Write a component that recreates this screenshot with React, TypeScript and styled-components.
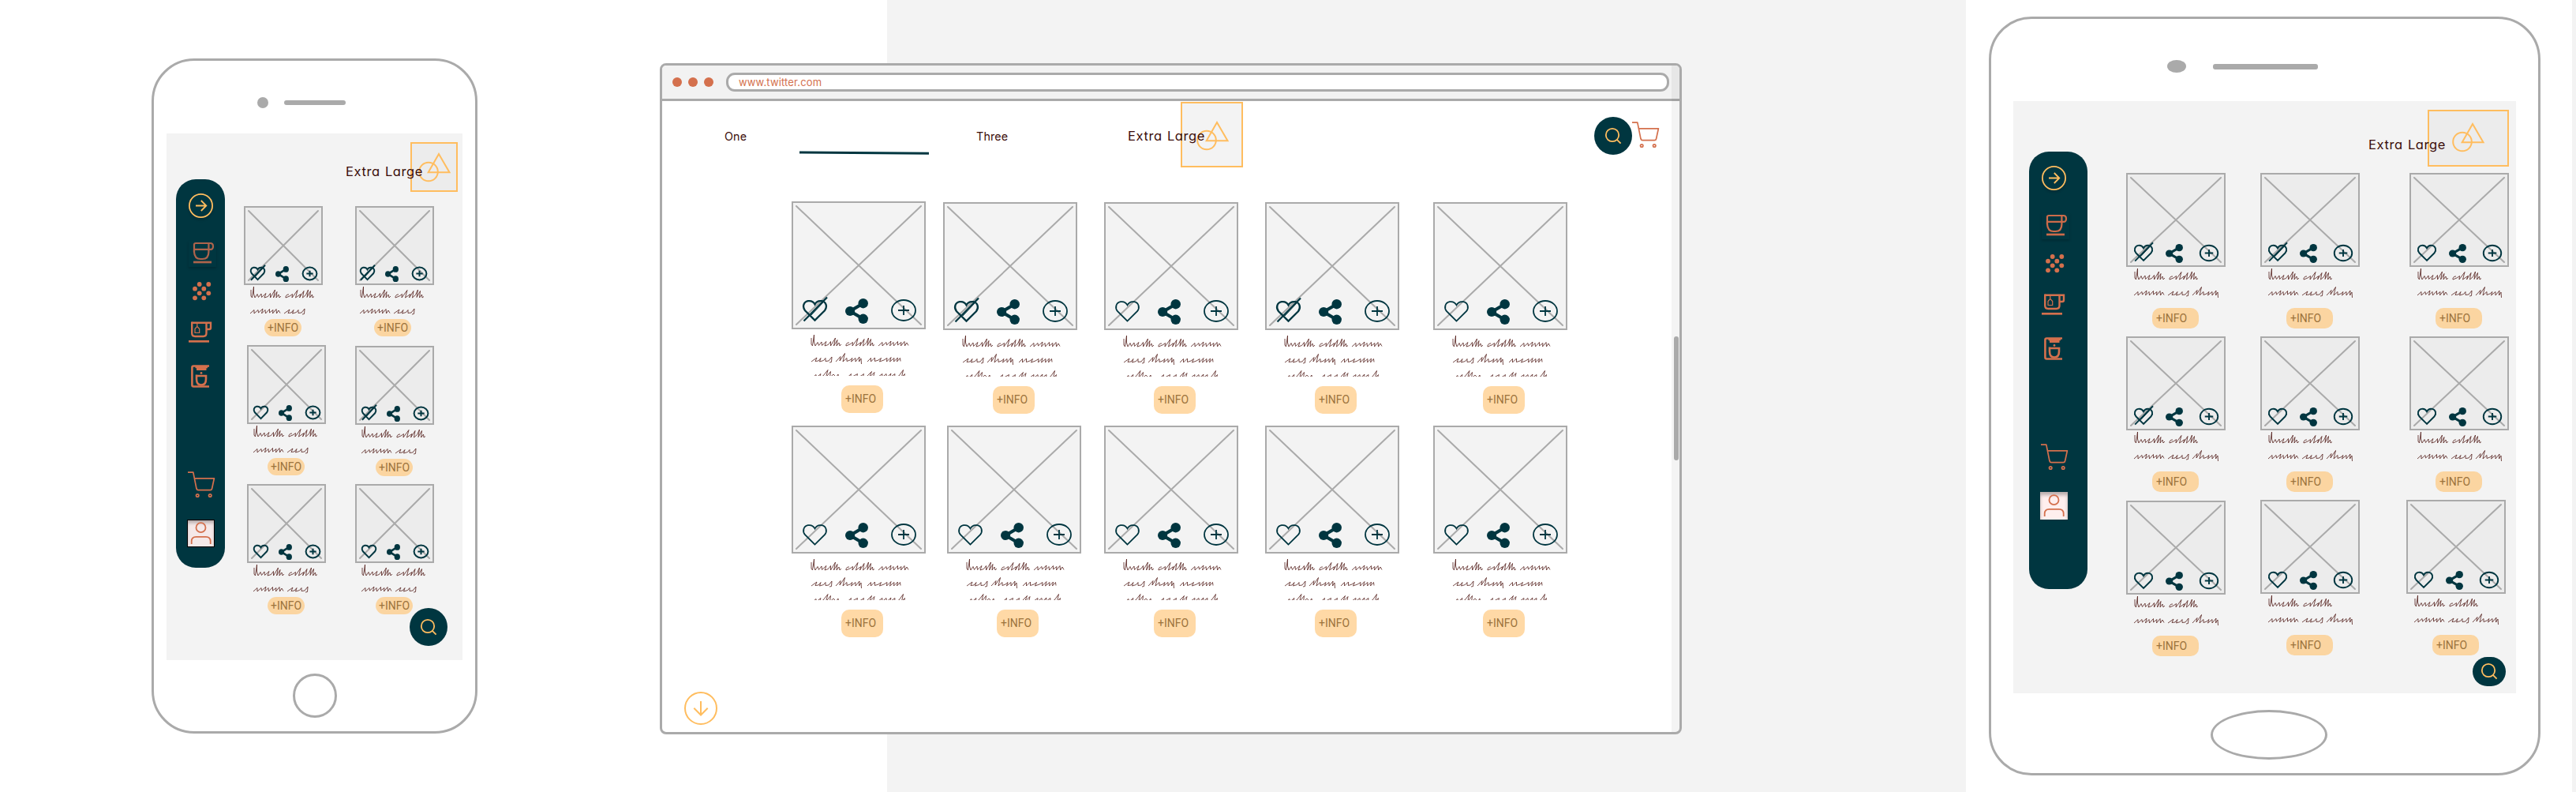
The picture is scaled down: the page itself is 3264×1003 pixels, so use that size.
import React from "react";
import styled, { createGlobalStyle, css } from "styled-components";

const c = {
  line: "#aaaaaa",
  paper: "#f3f3f3",
  thumb: "#ececec",
  teal: "#003640",
  coral: "#d4704d",
  amber: "#ffbd5f",
  ink: "#3b0d0a",
  pillText: "#9c733c",
};

const Global = createGlobalStyle`
  * { box-sizing: border-box; }
  body { margin: 0; background: #ffffff; }
  svg { display: block; overflow: visible; flex: none; }
`;

const Board = styled.main`
  width: 3264px;
  height: 1003px;
  display: flex;
  align-items: flex-start;
  overflow: hidden;
  background: linear-gradient(
    to right,
    #ffffff 1124px,
    ${c.paper} 1124px 2491px,
    #ffffff 2491px 3259px,
    ${c.paper} 3259px
  );
`;

/* ---------- sizes ---------- */

type Kind = "phone" | "browser" | "tablet";

const sizes = {
  phone: {
    w: 100, h: 100, x: [6, 94, 6, 94], fill: c.thumb,
    left: 8, gapA: 13, gapB: 17, bottom: 6, shareDrop: 2,
    heart: [19, 17], share: [17, 20], plus: [19, 17], stroke: 2,
    textLeft: 8, textTop: 2, textH: 38, textW: 82,
    pillLeft: 26, pillTop: 3, pillW: 47, pillH: 22, pillR: "11px", pillPad: 0,
    pill: "#fbd5a1", rowH: 176,
  },
  browser: {
    w: 170, h: 162, x: [6, 164, 6, 156], fill: c.paper,
    left: 14, gapA: 23, gapB: 29, bottom: 10, shareDrop: 3,
    heart: [31, 27], share: [29, 32], plus: [32, 28], stroke: 1.8,
    textLeft: 24, textTop: 7, textH: 52, textW: 126,
    pillLeft: 63, pillTop: 12, pillW: 53, pillH: 35, pillR: "10px", pillPad: 5,
    pill: "#ffd9a6", rowH: 284,
  },
  tablet: {
    w: 126, h: 119, x: [6, 120, 6, 113], fill: c.thumb,
    left: 10, gapA: 16, gapB: 21, bottom: 7, shareDrop: 2,
    heart: [24, 21], share: [22, 24], plus: [24, 21], stroke: 1.9,
    textLeft: 10, textTop: 2, textH: 38, textW: 110,
    pillLeft: 33, pillTop: 12, pillW: 59, pillH: 26, pillR: "10px", pillPad: 5,
    pill: "#fbd5a1", rowH: 207,
  },
} as const;

/* ---------- product card ---------- */

const Cell = styled.article<{ $kind: Kind; $ml: number; $mt: number }>`
  display: flex;
  flex-direction: column;
  align-items: flex-start;
  flex: none;
  width: ${(p) => sizes[p.$kind].w}px;
  margin: ${(p) => p.$mt}px 0 0 ${(p) => p.$ml}px;
`;

const Thumb = styled.div<{ $kind: Kind }>`
  position: relative;
  width: ${(p) => sizes[p.$kind].w}px;
  height: ${(p) => sizes[p.$kind].h}px;
  border: 2px solid ${c.line};
  background: ${(p) => sizes[p.$kind].fill};
`;

const Cross = styled.svg`
  position: absolute;
  left: -2px;
  top: -2px;
`;

const Actions = styled.div<{ $kind: Kind; $shift: number }>`
  position: absolute;
  left: ${(p) => sizes[p.$kind].left - 2 + p.$shift}px;
  bottom: ${(p) => sizes[p.$kind].bottom - 2}px;
  display: flex;
  align-items: flex-end;
`;

const ShareSlot = styled.span<{ $kind: Kind }>`
  margin: 0 ${(p) => sizes[p.$kind].gapB}px -${(p) => sizes[p.$kind].shareDrop}px
    ${(p) => sizes[p.$kind].gapA}px;
`;

const Copy = styled.div<{ $kind: Kind; $shift: number }>`
  display: flex;
  flex-direction: column;
  flex: none;
  overflow: hidden;
  width: ${(p) => sizes[p.$kind].textW}px;
  height: ${(p) => sizes[p.$kind].textH}px;
  margin: ${(p) => sizes[p.$kind].textTop}px 0 0
    ${(p) => sizes[p.$kind].textLeft + p.$shift}px;
`;

const CopyLine = styled.div<{ $indent?: number }>`
  display: flex;
  gap: 5px;
  height: 20px;
  flex: none;
  padding-left: ${(p) => p.$indent ?? 0}px;
`;

const Pill = styled.button<{ $kind: Kind; $shift: number }>`
  flex: none;
  display: flex;
  align-items: center;
  justify-content: ${(p) => (p.$kind === "phone" ? "center" : "flex-start")};
  width: ${(p) => sizes[p.$kind].pillW}px;
  height: ${(p) => sizes[p.$kind].pillH}px;
  margin: ${(p) => sizes[p.$kind].pillTop}px 0 0
    ${(p) => sizes[p.$kind].pillLeft + p.$shift}px;
  padding: 0 0 ${(p) => (p.$kind === "browser" ? 2 : 0)}px
    ${(p) => sizes[p.$kind].pillPad}px;
  border: 0;
  border-radius: ${(p) => sizes[p.$kind].pillR};
  background: ${(p) => sizes[p.$kind].pill};
  color: ${c.pillText};
  font: 14px/16px Roboto, "Liberation Sans", sans-serif;
  white-space: nowrap;
`;

const words = {
  one: { w: 39, d: "M1 4L1 12L2.5 14L4.500 0L4.500 9L6 14L9 9.500L10.500 13.500L14 9L14.500 13.500L20 8.500L18 14L22.500 12.500L25.500 8.500L25.500 14L31.500 4L29.500 14L34 6.500L33 14L36 10L37 14L39 12" },
  two: { w: 37, d: "M5 10C2 9.500 .5 12.500 1 14L6 12L9.500 9.500L9 14L16 4.500L13.500 14L20 9.500L18.500 14L24 5.500L22.500 14L26.500 10.500L29.500 4L28 13.500L32.500 5.500L31.500 14L34.500 10L35 14L37 12.500" },
  three: { w: 38, d: "M0 14L5 9.500L5 14L10 9.500L10.500 13L16 8L14.500 14L19 9.500L19.500 14L24.500 8.500L24.500 13L29 9.500L28.500 14L33 8.500L33.500 14L36 10L38 13.500" },
  four: { w: 26, d: "M0 14L7 9L5 13.500L9 13L12 9.500L10.500 14L15.500 12.500L18 9.500L18 13.500L22 13L26 8L25.500 14.500L23 15" },
  five: { w: 35, d: "M0 14L6 7.500L5 13L11.500 3.500L9 14L14 9.500L14 13.500L18 12L21 9.500L19.500 14L25 9.500L25 14L30 8L29.500 14L32 10L32.500 17" },
  six: { w: 42, d: "M0 14L4.500 9.500L4.500 14L9.500 9L9.500 13.500L14 12L17.500 9.500L15.500 14L21 12L25 9.500L24.500 14L30 8.500L28.500 14L34 9.500L33.500 14L38.500 9L37.500 14L41.500 9.500L42 13.500" },
  seven: { w: 39, d: "M0 14.500L5 10.500L5.500 14L11 9.500L9.500 14L14 12L20 4.500L17.500 14L23.500 6.500L22.500 14L27 10L30.500 13.500L33 10L33.500 14L39 12.500" },
  eight: { w: 73, d: "M0 14.500L5.500 9.500L4.500 14L9 12L13.500 9.500L12.500 14L18 12L21.500 9.500L20.500 14L25 13L31.500 6.500L28.500 14L35 7.500L33.500 14L40 13L45 9.500L44.500 14L50 9.500L50.500 14L56 9L54.500 14L61 9.500L60.500 14L66 12L71.500 4.500L69.500 13.500L73.500 9.500L72.500 14" },
} as const;

type WordName = keyof typeof words;

const Word = ({ name }: { name: WordName }) => (
  <svg width={words[name].w} height="20" fill="none">
    <path d={words[name].d} stroke="#54201c" strokeWidth="0.8" strokeLinejoin="bevel" />
  </svg>
);

const copyLines: Record<Kind, { indent?: number; words: WordName[] }[]> = {
  phone: [{ words: ["one", "two"] }, { words: ["three", "four"] }],
  browser: [
    { words: ["one", "two", "three"] },
    { indent: 1, words: ["four", "five", "six"] },
    { indent: 2, words: ["seven", "eight"] },
  ],
  tablet: [{ words: ["one", "two"] }, { words: ["three", "four", "five"] }],
};

const Heart = ({ kind, off }: { kind: Kind; off?: boolean }) => {
  const s = sizes[kind];
  const sw = s.stroke + (off && kind === "browser" ? 0.5 : 0);
  return (
    <svg width={s.heart[0]} height={s.heart[1]} viewBox="0 0 31 27" preserveAspectRatio="none" fill="none" stroke={c.teal} strokeWidth={sw}>
      <path vectorEffect="non-scaling-stroke" d="M15.5 25.6L3 13.2C-.6 8.6 1 2.4 6.8 1.2C10.6.6 13.8 2.2 15.5 5.4C17.2 2.2 20.4.6 24.2 1.2C30 2.4 31.6 8.6 28 13.2Z" />
      {off && <path vectorEffect="non-scaling-stroke" d="M1.5 26.5L31-3.5" />}
      {off && <path vectorEffect="non-scaling-stroke" d="M11 19L26 3" strokeWidth={1} />}
    </svg>
  );
};

const Share = ({ kind }: { kind: Kind }) => (
  <svg width={sizes[kind].share[0]} height={sizes[kind].share[1]} viewBox="0 0 29 32" preserveAspectRatio="none" fill={c.teal}>
    <circle cx="6.1" cy="16" r="6.1" />
    <circle cx="22.7" cy="6.2" r="6.2" />
    <circle cx="22.7" cy="25.8" r="6.2" />
    <path d="M22.7 6.2L6 16L22.7 25.8" fill="none" stroke={c.teal} strokeWidth="4.2" />
  </svg>
);

const Plus = ({ kind }: { kind: Kind }) => (
  <svg width={sizes[kind].plus[0]} height={sizes[kind].plus[1]} viewBox="0 0 32 28" preserveAspectRatio="none" fill="none" stroke={c.teal} strokeWidth={sizes[kind].stroke}>
    <ellipse vectorEffect="non-scaling-stroke" cx="16" cy="14" rx="15" ry="13" />
    <path vectorEffect="non-scaling-stroke" d="M9 14H23M16 8V20" />
  </svg>
);

type CardSpec = { ml: number; mt?: number; off?: boolean; shift?: number };

const Card = ({ kind, ml, mt = 0, off, shift = 0 }: CardSpec & { kind: Kind }) => {
  const s = sizes[kind];
  const [x1, x2, y1, y2] = s.x;
  return (
    <Cell $kind={kind} $ml={ml} $mt={mt}>
      <Thumb $kind={kind}>
        <Cross width={s.w} height={s.h} stroke={c.line} strokeWidth="2" strokeLinecap="round">
          <path d={`M${x1} ${y1}L${x2} ${y2}M${x2} ${y1}L${x1} ${y2}`} />
        </Cross>
        <Actions $kind={kind} $shift={shift}>
          <Heart kind={kind} off={off} />
          <ShareSlot $kind={kind}>
            <Share kind={kind} />
          </ShareSlot>
          <Plus kind={kind} />
        </Actions>
      </Thumb>
      <Copy $kind={kind} $shift={shift}>
        {copyLines[kind].map((l, i) => (
          <CopyLine key={i} $indent={l.indent}>
            {l.words.map((w) => (
              <Word key={w} name={w} />
            ))}
          </CopyLine>
        ))}
      </Copy>
      <Pill $kind={kind} $shift={shift}>+INFO</Pill>
    </Cell>
  );
};

const Row = styled.div<{ $h: number }>`
  display: flex;
  align-items: flex-start;
  height: ${(p) => p.$h}px;
  flex: none;
`;

const Catalogue = styled.section<{ $mt: number }>`
  display: flex;
  flex-direction: column;
  margin-top: ${(p) => p.$mt}px;
`;

const Cards = ({ kind, top, rows }: { kind: Kind; top: number; rows: CardSpec[][] }) => (
  <Catalogue $mt={top}>
    {rows.map((row, i) => (
      <Row key={i} $h={sizes[kind].rowH}>
        {row.map((card, j) => (
          <Card key={j} kind={kind} {...card} />
        ))}
      </Row>
    ))}
  </Catalogue>
);

/* ---------- shared pieces ---------- */

const handFont = css`
  font-family: Inter, "Open Sans", sans-serif;
  font-feature-settings: "cv11" 1;
  color: ${c.ink};
  white-space: nowrap;
`;

const Brand = styled.div<{ $mt?: number; $ml?: number }>`
  display: flex;
  align-items: flex-start;
  justify-content: flex-end;
  margin: ${(p) => p.$mt ?? 0}px 0 0 ${(p) => p.$ml ?? 0}px;
`;

const BrandName = styled.span<{ $mt: number; $overlap: number }>`
  ${handFont}
  position: relative;
  z-index: 1;
  width: 96px;
  font-size: 16.5px;
  font-weight: 400;
  letter-spacing: 0.6px;
  word-spacing: 1px;
  line-height: 20px;
  margin: ${(p) => p.$mt}px -${(p) => p.$overlap}px 0 0;
`;

const LogoBox = styled.div<{ $w: number; $h: number; $fill: string; $px: number; $py: number }>`
  flex: none;
  width: ${(p) => p.$w}px;
  height: ${(p) => p.$h}px;
  border: 2px solid ${c.amber};
  background: ${(p) => p.$fill};
  padding: ${(p) => p.$py - 2}px 0 0 ${(p) => p.$px - 2}px;
`;

const LogoMark = () => (
  <svg width="41" height="37" fill="none" stroke={c.amber} strokeWidth="2">
    <circle cx="13" cy="24.5" r="11.8" />
    <path d="M26 2L39.5 25.2H12.7Z" />
  </svg>
);

const SearchDisc = styled.button<{ $w: number; $h: number; $r: string }>`
  flex: none;
  display: flex;
  align-items: center;
  justify-content: center;
  padding: 0 0 1px;
  border: 0;
  width: ${(p) => p.$w}px;
  height: ${(p) => p.$h}px;
  border-radius: ${(p) => p.$r};
  background: ${c.teal};
`;

const SearchIcon = () => (
  <svg width="20" height="20" fill="none" stroke={c.amber} strokeWidth="1.8">
    <circle cx="9" cy="9" r="8.2" />
    <path d="M14.8 14.8L19.6 19.6" />
  </svg>
);

const CartIcon = () => (
  <svg width="34" height="34" fill="none" stroke={c.coral} strokeWidth="1.7" strokeLinejoin="round">
    <path d="M0 1.2H6.8L11 21.8Q11.5 23.7 13.2 23.7H28.4Q30.2 23.7 30.6 21.8L33.4 8.8H8.4" />
    <circle cx="12.2" cy="30.5" r="1.7" />
    <circle cx="28.2" cy="30.5" r="1.7" />
  </svg>
);

/* ---------- side bar ---------- */

const Side = styled.nav<{ $w: number; $h: number; $ml: number; $mt: number }>`
  flex: none;
  display: flex;
  flex-direction: column;
  align-items: flex-start;
  width: ${(p) => p.$w}px;
  height: ${(p) => p.$h}px;
  margin: ${(p) => p.$mt}px 0 0 ${(p) => p.$ml}px;
  border-radius: 25px;
  background: ${c.teal};
`;

const Slot = styled.span<{ $mt: number; $ml: number }>`
  margin: ${(p) => p.$mt}px 0 0 ${(p) => p.$ml}px;
`;

const GoSlot = styled(Slot)`
  border-radius: 50%;
  box-shadow: 0 3px 3px rgba(0, 0, 0, 0.14);
`;

const CupSlot = styled(Slot)`
  box-shadow: 0 2px 3px rgba(0, 0, 0, 0.2);
`;

const Avatar = styled(Slot)<{ $framed: boolean }>`
  width: 35px;
  height: 35px;
  background: ${(p) => (p.$framed ? "#f5e9e9" : "#ffefee")};
  box-shadow: ${(p) => (p.$framed ? "inset 0 0 0 1px #000, " : "")}inset 0 4px 4px
    rgba(0, 0, 0, 0.28);
`;

const SideBar = ({ w, h, ml, mt, framed }: { w: number; h: number; ml: number; mt: number; framed: boolean }) => (
  <Side $w={w} $h={h} $ml={ml} $mt={mt}>
    <GoSlot $mt={18} $ml={16}>
      <svg width="31" height="31" fill="none" stroke={c.amber} strokeWidth="1.8">
        <circle cx="15.5" cy="15.5" r="14.6" />
        <path d="M9 15.5H22M15.8 9L22.3 15.5L15.8 22" />
      </svg>
    </GoSlot>
    <CupSlot $mt={29} $ml={16}>
      <svg width="35" height="33" fill="none" stroke={framed ? "#ae644c" : "#cd6b4a"} strokeWidth="2.2">
        <path d="M7 14V5Q7 3 9 3H27.5Q31 3 31 7T27.5 10.8H7" />
        <path d="M7 11V14Q7.500 23 15 23H17.500Q25.400 23 25.400 14V3" />
        <path d="M6 27H29" strokeWidth="2.700" />
      </svg>
    </CupSlot>
    <Slot $mt={19} $ml={21}>
      <svg width="24" height="24" fill={c.coral}>
        {[[8.7, 3], [20.3, 3], [3, 8.7], [14.3, 8.7], [8.7, 14.3], [20.3, 14.3], [3, 20.3], [14.3, 20.3]].map(([x, y]) => (
          <circle key={`${x}-${y}`} cx={x} cy={y} r="2.9" />
        ))}
      </svg>
    </Slot>
    <Slot $mt={26} $ml={16}>
      <svg width="29" height="27" fill="none" stroke={c.coral} strokeWidth="2.4">
        <path d="M4.200 1.700H28V8Q28 10 26 10H23" />
        <path d="M4.200.5V15Q4.200 19 8.200 19H18.500Q22.500 19 22.500 15V1.700" />
        <path d="M0 25.300H26" strokeWidth="2.700" />
        <path d="M10.800 2V6.500L8 9.500V14.500H13.700V9.500L10.800 6.500" strokeWidth="1.200" />
      </svg>
    </Slot>
    <Slot $mt={28} $ml={19}>
      <svg width="23" height="29" fill="none" stroke={c.coral} strokeWidth="2.6">
        <path d="M23 1.500H3.300Q1.400 1.500 1.400 3.400V25.600Q1.400 27.500 3.300 27.500H23" />
        <path d="M5.500 1H21V4.200H19.500V7H7V4.200H5.500Z" fill={c.coral} stroke="none" />
        <circle cx="13" cy="10.400" r="1.400" fill={c.coral} stroke="none" />
        <path d="M7 12.500V18Q7 25.500 13 25.500T19 18V14H7" />
      </svg>
    </Slot>
    <Slot $mt={106} $ml={15}>
      <CartIcon />
    </Slot>
    <Avatar $mt={27} $ml={14} $framed={framed}>
      <svg width="35" height="35" fill="none" stroke={c.coral} strokeWidth="1.8">
        <circle cx="17.500" cy="10.200" r="6" />
        <path d="M5.700 31V27.500Q5.700 21.800 11.400 21.800H24Q29.700 21.800 29.700 27.500V31" />
      </svg>
    </Avatar>
  </Side>
);

/* ---------- hand-held devices ---------- */

const Frame = styled.section<{ $w: number; $h: number; $ml: number; $mt: number }>`
  flex: none;
  display: flex;
  flex-direction: column;
  align-items: center;
  width: ${(p) => p.$w}px;
  height: ${(p) => p.$h}px;
  margin: ${(p) => p.$mt}px 0 0 ${(p) => p.$ml}px;
  border: 3px solid ${c.line};
  border-radius: 54px;
  background: #ffffff;
`;

const Sensors = styled.div<{ $pad: string; $gap: number; $h: number }>`
  align-self: stretch;
  flex: none;
  display: flex;
  align-items: center;
  height: ${(p) => p.$h}px;
  padding: ${(p) => p.$pad};
  gap: ${(p) => p.$gap}px;
`;

const Dot = styled.i<{ $w: number; $h: number; $round: string; $color?: string }>`
  display: block;
  flex: none;
  width: ${(p) => p.$w}px;
  height: ${(p) => p.$h}px;
  border-radius: ${(p) => p.$round};
  background: ${(p) => p.$color ?? c.line};
`;

const Screen = styled.div<{ $w: number; $h: number }>`
  position: relative;
  flex: none;
  display: flex;
  align-items: flex-start;
  width: ${(p) => p.$w}px;
  height: ${(p) => p.$h}px;
  background: ${c.paper};
`;

const Main = styled.div`
  flex: 1;
  min-width: 0;
  display: flex;
  flex-direction: column;
`;

const BrandBar = styled.header<{ $right: number }>`
  display: flex;
  justify-content: flex-end;
  padding: 11px ${(p) => p.$right}px 0 0;
`;

const Floating = styled.div<{ $right: number; $bottom: number }>`
  position: absolute;
  right: ${(p) => p.$right}px;
  bottom: ${(p) => p.$bottom}px;
`;

const Home = styled.div<{ $w: number; $h: number; $mt: number; $shift: number }>`
  flex: none;
  width: ${(p) => p.$w}px;
  height: ${(p) => p.$h}px;
  margin: ${(p) => p.$mt}px 0 0 ${(p) => p.$shift}px;
  border: 3px solid ${c.line};
  border-radius: 50%;
`;

const Phone = () => (
  <Frame $w={413} $h={855} $ml={192} $mt={74}>
    <Sensors $h={92} $pad="46px 0 32px 131px" $gap={20}>
      <Dot $w={14} $h={14} $round="50%" />
      <Dot $w={78} $h={6} $round="3px" />
    </Sensors>
    <Screen $w={375} $h={667}>
      <SideBar w={62} h={492} ml={12} mt={58} framed />
      <Main>
        <BrandBar $right={6}>
          <Brand>
            <BrandName $mt={27} $overlap={14}>Extra Large</BrandName>
            <LogoBox $w={60} $h={63} $fill={c.thumb} $px={10} $py={13}>
              <LogoMark />
            </LogoBox>
          </Brand>
        </BrandBar>
        <Cards
          kind="phone"
          top={18}
          rows={[
            [{ ml: 24, off: true }, { ml: 41, off: true, shift: -2 }],
            [{ ml: 28 }, { ml: 37, mt: 1, off: true }],
            [{ ml: 28 }, { ml: 37 }],
          ]}
        />
      </Main>
      <Floating $right={19} $bottom={18}>
        <SearchDisc $w={48} $h={48} $r="24px"><SearchIcon /></SearchDisc>
      </Floating>
    </Screen>
    <Home $w={56} $h={56} $mt={17} $shift={1} />
  </Frame>
);

const Tablet = () => (
  <Frame $w={699} $h={961} $ml={389} $mt={21}>
    <Sensors $h={104} $pad="52px 0 36px 223px" $gap={34}>
      <Dot $w={24} $h={16} $round="50%" />
      <Dot $w={133} $h={7} $round="3px" />
    </Sensors>
    <Screen $w={637} $h={750}>
      <SideBar w={74} h={554} ml={20} mt={64} framed={false} />
      <Main>
        <BrandBar $right={9}>
          <Brand>
            <BrandName $mt={34} $overlap={21}>Extra Large</BrandName>
            <LogoBox $w={103} $h={72} $fill={c.thumb} $px={31} $py={16}>
              <LogoMark />
            </LogoBox>
          </Brand>
        </BrandBar>
        <Cards
          kind="tablet"
          top={8}
          rows={[
            [{ ml: 49, off: true }, { ml: 44, off: true }, { ml: 63 }],
            [{ ml: 49, off: true }, { ml: 44 }, { ml: 63 }],
            [{ ml: 49, mt: 1 }, { ml: 44 }, { ml: 59 }],
          ]}
        />
      </Main>
      <Floating $right={13} $bottom={9}>
        <SearchDisc $w={42} $h={37} $r="19px"><SearchIcon /></SearchDisc>
      </Floating>
    </Screen>
    <Home $w={148} $h={63} $mt={21} $shift={11} />
  </Frame>
);

/* ---------- browser window ---------- */

const Window = styled.section`
  position: relative;
  flex: none;
  display: flex;
  flex-direction: column;
  width: 1295px;
  height: 850px;
  margin: 80px 0 0 231px;
  border: 3px solid ${c.line};
  border-radius: 8px;
  background: #ffffff;
  overflow: hidden;
`;

const Toolbar = styled.div`
  flex: none;
  display: flex;
  align-items: center;
  height: 45px;
  padding: 0 13px 0;
  border-bottom: 3px solid ${c.line};
  background: #f2f2f2;
`;

const Lights = styled.div`
  display: flex;
  gap: 8px;
  margin-right: 16px;
`;

const Address = styled.div`
  flex: 1;
  display: flex;
  align-items: center;
  height: 24px;
  padding: 1px 0 0 13px;
  border: 3px solid ${c.line};
  border-radius: 11px;
  background: #ffffff;
  ${handFont}
  color: ${c.coral};
  font-size: 13px;
  letter-spacing: 0.15px;
  line-height: 17px;
`;

const Nav = styled.nav`
  flex: none;
  display: flex;
  align-items: flex-start;
  height: 84px;
`;

const Tab = styled.span<{ $ml: number; $w: number }>`
  ${handFont}
  flex: none;
  width: ${(p) => p.$w}px;
  margin: 35px 0 0 ${(p) => p.$ml}px;
  font-size: 14.3px;
  letter-spacing: 0.15px;
  line-height: 20px;
`;

const Marker = styled.svg`
  margin: 63px 0 0 66px;
`;

const Tools = styled.div`
  display: flex;
  align-items: flex-start;
  margin: 20px 0 0 445px;
`;

const CartButton = styled.span`
  margin: 6px 0 0 0;
`;

const Down = styled.div`
  margin: auto 0 9px 28px;
`;

const Rail = styled.div`
  position: absolute;
  top: 0;
  right: 0;
  bottom: 0;
  width: 10px;
  padding: 343px 0 0 3px;
  background: rgba(0, 0, 0, 0.045);
`;

const Browser = () => (
  <Window>
    <Toolbar>
      <Lights>
        <Dot $w={12} $h={12} $round="50%" $color={c.coral} />
        <Dot $w={12} $h={12} $round="50%" $color={c.coral} />
        <Dot $w={12} $h={12} $round="50%" $color={c.coral} />
      </Lights>
      <Address>www.twitter.com</Address>
    </Toolbar>
    <Nav>
      <Tab $ml={79} $w={29}>One</Tab>
      <Marker width="164" height="5" stroke={c.teal} strokeWidth="3">
        <path d="M0 2L164 3.3" />
      </Marker>
      <Tab $ml={60} $w={43}>Three</Tab>
      <Brand $mt={1} $ml={149}>
        <BrandName $mt={33} $overlap={29}>Extra Large</BrandName>
        <LogoBox $w={79} $h={83} $fill={c.paper} $px={20} $py={24}>
          <LogoMark />
        </LogoBox>
      </Brand>
      <Tools>
        <SearchDisc $w={48} $h={48} $r="24px"><SearchIcon /></SearchDisc>
        <CartButton><CartIcon /></CartButton>
      </Tools>
    </Nav>
    <Cards
      kind="browser"
      top={43}
      rows={[
        [{ ml: 164, off: true }, { ml: 22, mt: 1, off: true }, { ml: 34, mt: 1 }, { ml: 34, mt: 1, off: true }, { ml: 43, mt: 1 }],
        [{ ml: 164 }, { ml: 27 }, { ml: 29 }, { ml: 34 }, { ml: 43 }],
      ]}
    />
    <Down>
      <svg width="42" height="42" fill="none" stroke={c.amber} strokeWidth="2">
        <circle cx="21" cy="21" r="20" />
        <path d="M21 12V29.500M12.300 20.800L21 29.500L29.700 20.800" />
      </svg>
    </Down>
    <Rail>
      <Dot $w={6} $h={157} $round="3px" />
    </Rail>
  </Window>
);

export default function App() {
  return (
    <>
      <Global />
      <Board>
        <Phone />
        <Browser />
        <Tablet />
      </Board>
    </>
  );
}
